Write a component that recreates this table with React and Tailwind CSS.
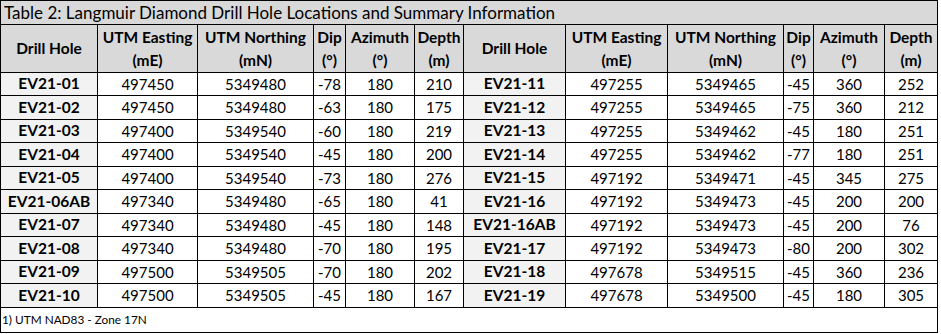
import React from "react";

const left = [
  ["EV21-01", "497450", "5349480", "-78", "180", "210"],
  ["EV21-02", "497450", "5349480", "-63", "180", "175"],
  ["EV21-03", "497400", "5349540", "-60", "180", "219"],
  ["EV21-04", "497400", "5349540", "-45", "180", "200"],
  ["EV21-05", "497400", "5349540", "-73", "180", "276"],
  ["EV21-06AB", "497340", "5349480", "-65", "180", "41"],
  ["EV21-07", "497340", "5349480", "-45", "180", "148"],
  ["EV21-08", "497340", "5349480", "-70", "180", "195"],
  ["EV21-09", "497500", "5349505", "-70", "180", "202"],
  ["EV21-10", "497500", "5349505", "-45", "180", "167"],
];
const right = [
  ["EV21-11", "497255", "5349465", "-45", "360", "252"],
  ["EV21-12", "497255", "5349465", "-75", "360", "212"],
  ["EV21-13", "497255", "5349462", "-45", "180", "251"],
  ["EV21-14", "497255", "5349462", "-77", "180", "251"],
  ["EV21-15", "497192", "5349471", "-45", "345", "275"],
  ["EV21-16", "497192", "5349473", "-45", "200", "200"],
  ["EV21-16AB", "497192", "5349473", "-45", "200", "76"],
  ["EV21-17", "497192", "5349473", "-80", "200", "302"],
  ["EV21-18", "497678", "5349515", "-45", "360", "236"],
  ["EV21-19", "497678", "5349500", "-45", "180", "305"],
];

const headers = [
  ["Drill Hole"],
  ["UTM Easting", "(mE)"],
  ["UTM Northing", "(mN)"],
  ["Dip", "(°)"],
  ["Azimuth", "(°)"],
  ["Depth", "(m)"],
];

function Header({ lines }) {
  return (
    <div className="bg-[#d9d9d9] flex flex-col items-center justify-center font-bold text-[15.5px] leading-[23px] whitespace-nowrap">
      {lines.map((l, i) => (
        <span key={i}>{l}</span>
      ))}
    </div>
  );
}

function Cell({ children, hole }) {
  return (
    <div
      className={
        hole
          ? "bg-[#f2f2f2] flex items-center justify-center font-bold text-[15.5px] whitespace-nowrap"
          : "bg-white flex items-center justify-center text-[15px] whitespace-nowrap"
      }
    >
      {children}
    </div>
  );
}

export default function App() {
  return (
    <div className="bg-white w-[941px] h-[334px]">
      <div
        className="grid w-[938px] bg-black p-px gap-px text-black grid-cols-[96px_99px_115px_31px_68px_48px_101px_101px_115px_29px_70px_52px] grid-rows-[23px_47px_22px_23px_22px_23px_22px_23px_22px_23px_22px_23px_24px]"
        style={{ fontFamily: "Lato, 'Open Sans', sans-serif" }}
      >
        <div className="col-span-12 bg-[#d9d9d9] flex items-center pl-[3px] text-[17px]">
          Table 2: Langmuir Diamond Drill Hole Locations and Summary Information
        </div>
        {headers.map((h, i) => (
          <Header key={"a" + i} lines={h} />
        ))}
        {headers.map((h, i) => (
          <Header key={"b" + i} lines={h} />
        ))}
        {left.map((row, r) => (
          <React.Fragment key={r}>
            {row.map((v, i) => (
              <Cell key={"l" + i} hole={i === 0}>
                {v}
              </Cell>
            ))}
            {right[r].map((v, i) => (
              <Cell key={"r" + i} hole={i === 0}>
                {v}
              </Cell>
            ))}
          </React.Fragment>
        ))}
        <div className="col-span-12 bg-white flex items-center pl-[1px] text-[11.8px]">
          1) UTM NAD83 - Zone 17N
        </div>
      </div>
    </div>
  );
}
